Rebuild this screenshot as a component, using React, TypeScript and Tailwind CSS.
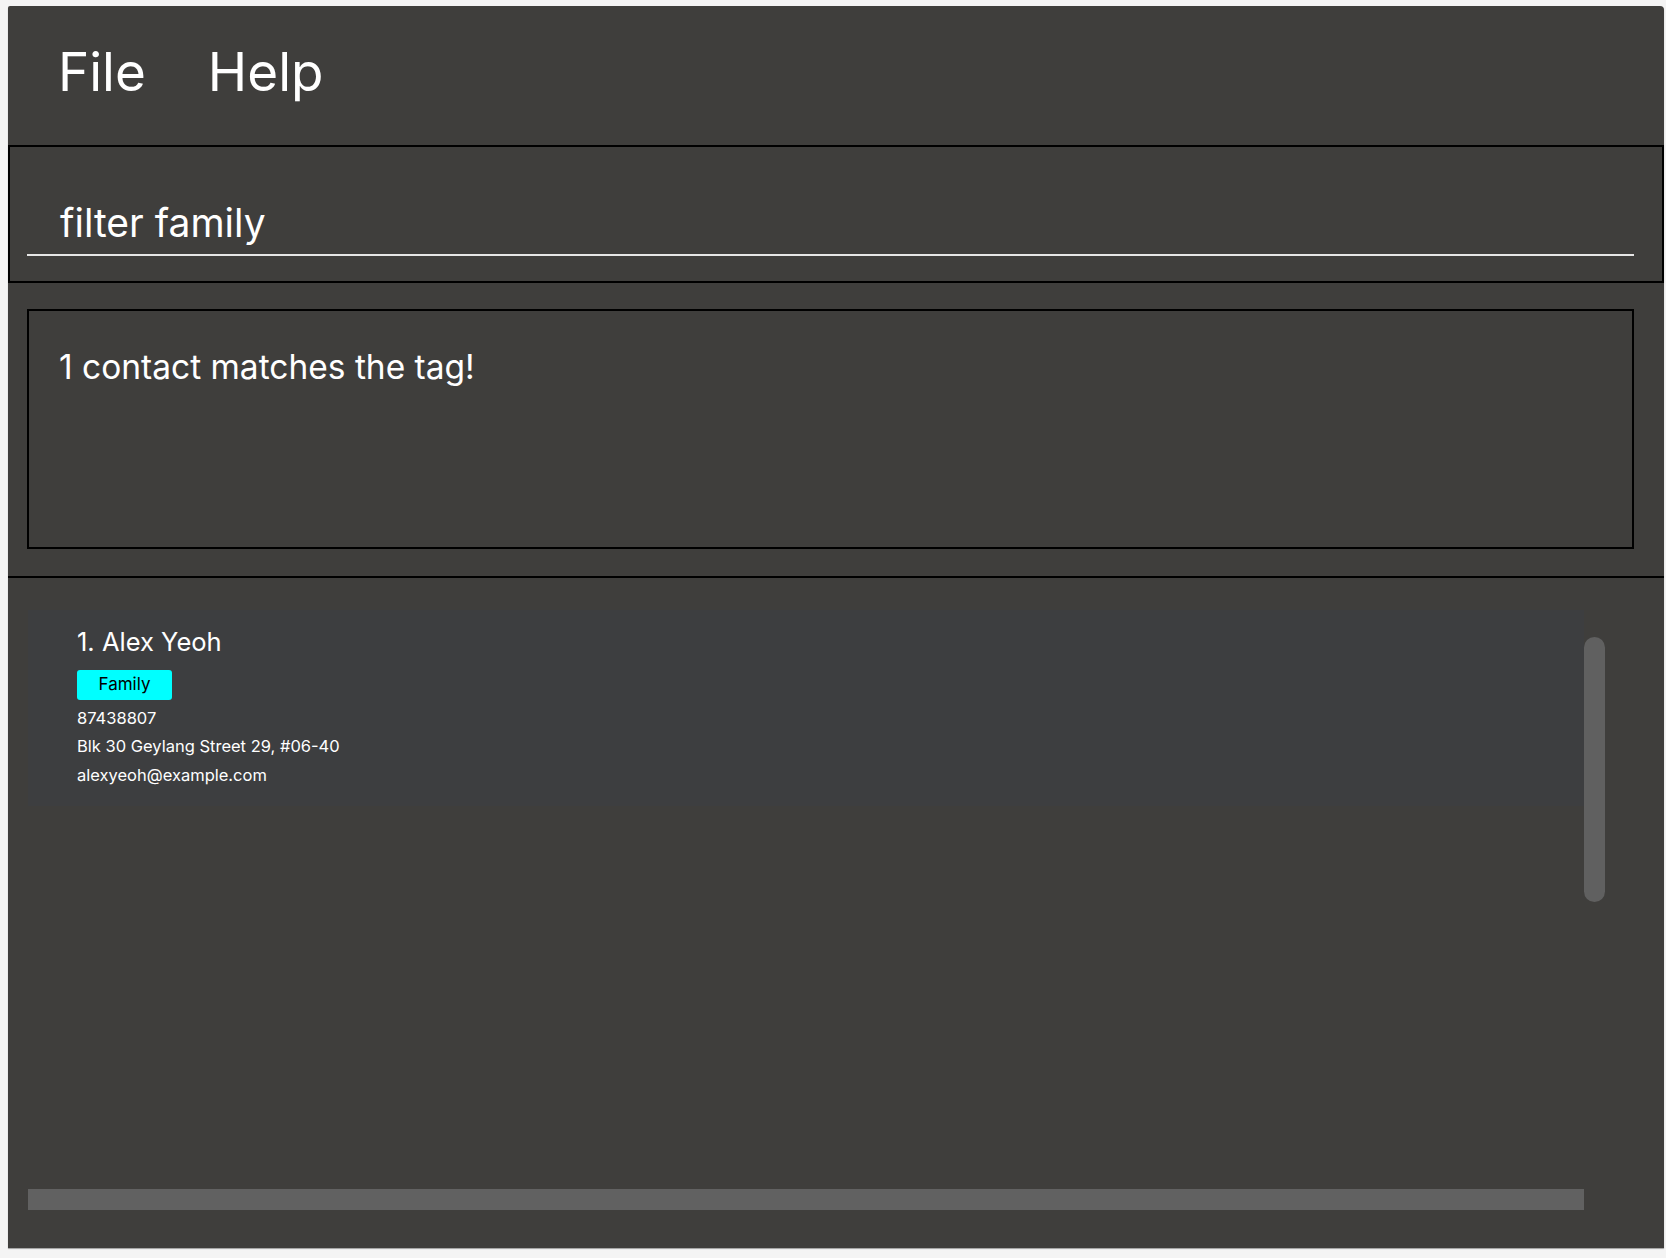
import React from "react";

export default function App() {
  return (
    <div
      className="w-[1666px] h-[1258px] bg-[#f4f4f4] pt-[6px] pl-[8px]"
      style={{ fontFamily: "Inter, 'Noto Sans', sans-serif" }}
    >
      <div className="w-[1656px] h-[1242px] bg-[#3f3e3c] rounded-tr-[4px] rounded-tl-[2px] shadow-[0_1px_1px_rgba(0,0,0,0.35)] flex flex-col text-white overflow-hidden">
        {/* Menu bar */}
        <div className="h-[139px] flex items-center pl-[50px] pb-[6px] gap-[62px] text-[53px] leading-none shrink-0">
          <span>File</span>
          <span>Help</span>
        </div>

        {/* Command box */}
        <div className="h-[138px] border-2 border-black shrink-0 flex flex-col">
          <div className="mt-[52px] ml-[17px] mr-[28px] flex flex-col">
            <div className="pl-[33px] pb-[8px] text-[39px] leading-[1.21]">filter family</div>
            <div className="h-[2px] bg-[#e6e6e6]" />
          </div>
        </div>

        {/* Result display */}
        <div className="h-[295px] shrink-0 pt-[26px] pl-[19px] pr-[30px] border-b-2 border-black">
          <div className="h-[240px] border-2 border-black pt-[36px] pl-[30px]">
            <div className="text-[33.5px] leading-[1.21]">1 contact matches the tag!</div>
          </div>
        </div>

        {/* Person list */}
        <div className="flex-1 flex flex-col pl-[20px]">
          <div className="h-[611px] flex flex-row">
            <div className="w-[1556px] pt-[32px]">
              <div className="h-[196px] bg-[#3d3e40] pt-[17px] pl-[49px] flex flex-col">
                <div className="text-[25.5px] leading-[1.21]">1. Alex Yeoh</div>
                <div className="mt-[12px] flex">
                  <div className="h-[30px] w-[95px] bg-[#00ffff] text-black rounded-[3px] flex items-center justify-center text-[17px]">
                    Family
                  </div>
                </div>
                <div className="mt-[4px] text-[16.5px] leading-[28.5px]">87438807</div>
                <div className="text-[16.5px] leading-[28.5px]">Blk 30 Geylang Street 29, #06-40</div>
                <div className="text-[16.5px] leading-[28.5px]">alexyeoh@example.com</div>
              </div>
            </div>
            <div className="w-[21px] pt-[59px]">
              <div className="h-[265px] w-[21px] rounded-full bg-[#606060]" />
            </div>
          </div>
          <div className="h-[21px] w-[1556px] bg-[#616161]" />
        </div>
      </div>
    </div>
  );
}
